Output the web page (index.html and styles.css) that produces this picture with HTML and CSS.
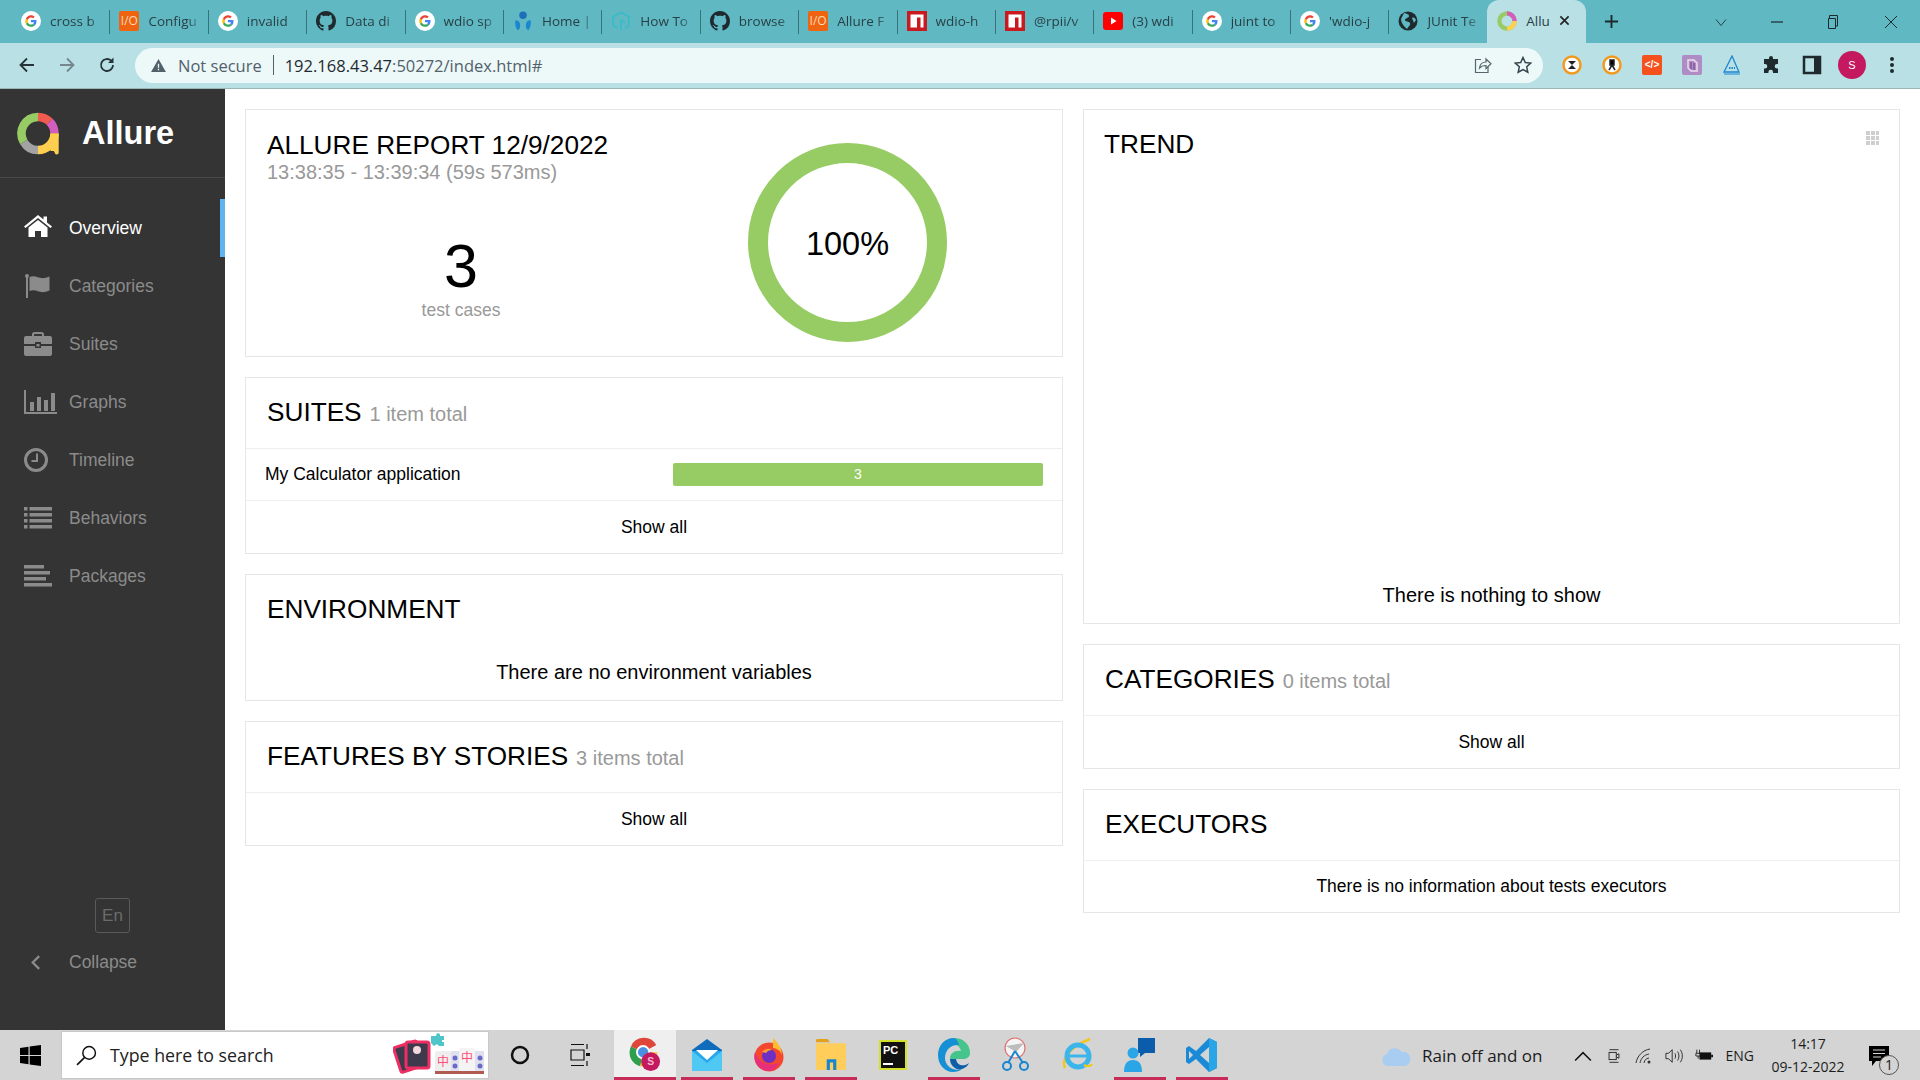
FILE: index.html
```html
<!DOCTYPE html>
<html lang="en">
<head>
  <meta charset="UTF-8" />
  <title>Allure Report</title>
  <link rel="stylesheet" href="styles.css">
</head>
<body>

  <!-- shared favicons -->
  <svg class="sprite" xmlns="http://www.w3.org/2000/svg">
    <symbol id="ic-google" viewBox="0 0 24 24">
      <circle cx="12" cy="12" r="12" fill="#fff"/>
      <path d="M18.6 12.2c0-.5 0-1-.1-1.4H12v2.7h3.7c-.2.9-.6 1.6-1.4 2.1l2.2 1.7c1.3-1.2 2.1-3 2.1-5.1z" fill="#4285f4"/>
      <path d="M12 19c1.9 0 3.4-.6 4.5-1.7l-2.2-1.7c-.6.4-1.4.7-2.3.7-1.8 0-3.3-1.2-3.8-2.8l-2.3 1.8C7 17.5 9.3 19 12 19z" fill="#34a853"/>
      <path d="M8.2 13.5c-.3-.9-.3-1.8 0-2.7L5.9 9c-1 1.9-1 4.2 0 6.3z" fill="#fbbc05"/>
      <path d="M12 7.8c1 0 1.9.3 2.6 1l1.900-2C15.300 5.700 13.800 5 12 5 9.300 5 7 6.500 5.900 9l2.300 1.800C8.700 9 10.200 7.800 12 7.800z" fill="#ea4335"/>
    </symbol>
    <symbol id="ic-github" viewBox="0 0 16 16">
      <path fill="#1f2a2e" d="M8 0C3.58 0 0 3.58 0 8c0 3.54 2.29 6.53 5.47 7.59.4.07.55-.17.55-.38 0-.19-.01-.82-.01-1.49-2.01.37-2.53-.49-2.69-.94-.09-.23-.48-.94-.82-1.13-.28-.15-.68-.52-.01-.53.63-.01 1.08.58 1.23.82.72 1.21 1.87.87 2.33.66.07-.52.28-.87.51-1.07-1.78-.2-3.64-.89-3.64-3.95 0-.87.31-1.59.82-2.15-.08-.2-.36-1.02.08-2.12 0 0 .67-.21 2.2.82.64-.18 1.32-.27 2-.27.68 0 1.36.09 2 .27 1.53-1.04 2.2-.82 2.2-.82.44 1.1.16 1.92.08 2.12.51.56.82 1.27.82 2.15 0 3.07-1.87 3.75-3.65 3.95.29.25.54.73.54 1.48 0 1.07-.01 1.93-.01 2.2 0 .21.15.46.55.38A8.013 8.013 0 0016 8c0-4.42-3.58-8-8-8z"/>
    </symbol>
    <symbol id="ic-npm" viewBox="0 0 20 20">
      <rect width="20" height="20" fill="#cb1a1f"/>
      <path d="M3.500 3.500h13v13h-3V6.500h-3.500v10h-6.500z" fill="#fff"/>
    </symbol>
    <symbol id="ic-wave" viewBox="0 0 20 24">
      <circle cx="10" cy="5" r="4.500" fill="#1c6fb8"/>
      <path d="M1 11c4 0 6 3 5.500 8-.3 2.500-2 4-3 4C1 20 0 15 1 11zM19 11c-4 0-6 3-5.500 8 .3 2.500 2 4 3 4 2.500-3 3.500-8 2.500-12z" fill="#1c86d0"/>
    </symbol>
    <symbol id="ic-howto" viewBox="0 0 22 24">
      <path d="M11 1.500 20.500 7v10L16 21M11 22.500V11l5 3M11 1.500 1.500 7v10l5 3" fill="none" stroke="#38bcc9" stroke-width="2"/>
    </symbol>
    <symbol id="ic-yt" viewBox="0 0 20 20">
      <rect y="1" width="20" height="18" rx="3" fill="#f00"/>
      <path d="M8 6.500 13.500 10 8 13.500z" fill="#fff"/>
    </symbol>
    <symbol id="ic-globe" viewBox="0 0 20 20">
      <circle cx="10" cy="10" r="9.500" fill="#1f2a2e"/>
      <path d="M6 2c3 1 5 1 5 3S7 7 7 9s4 1 5 3-2 4-3 6C5 15 3 11 3 8zM14 7c2-1 3 0 4 2l-2 3z" fill="#5fb8c2"/>
    </symbol>
  </svg>

  <header class="tabstrip">
    <div class="tab"><svg class="fav"><use href="#ic-google"/></svg><span class="tab-label">cross b</span></div>
    <div class="tab"><span class="fav io">I/O</span><span class="tab-label">Configu</span></div>
    <div class="tab"><svg class="fav"><use href="#ic-google"/></svg><span class="tab-label">invalid</span></div>
    <div class="tab"><svg class="fav"><use href="#ic-github"/></svg><span class="tab-label">Data di</span></div>
    <div class="tab"><svg class="fav"><use href="#ic-google"/></svg><span class="tab-label">wdio sp</span></div>
    <div class="tab"><svg class="fav"><use href="#ic-wave"/></svg><span class="tab-label">Home |</span></div>
    <div class="tab"><svg class="fav"><use href="#ic-howto"/></svg><span class="tab-label">How To</span></div>
    <div class="tab"><svg class="fav"><use href="#ic-github"/></svg><span class="tab-label">browse</span></div>
    <div class="tab"><span class="fav io">I/O</span><span class="tab-label">Allure F</span></div>
    <div class="tab"><svg class="fav"><use href="#ic-npm"/></svg><span class="tab-label">wdio-h</span></div>
    <div class="tab"><svg class="fav"><use href="#ic-npm"/></svg><span class="tab-label">@rpii/v</span></div>
    <div class="tab"><svg class="fav"><use href="#ic-yt"/></svg><span class="tab-label">(3) wdi</span></div>
    <div class="tab"><svg class="fav"><use href="#ic-google"/></svg><span class="tab-label">juint to</span></div>
    <div class="tab"><svg class="fav"><use href="#ic-google"/></svg><span class="tab-label">'wdio-j</span></div>
    <div class="tab tab-last"><svg class="fav"><use href="#ic-globe"/></svg><span class="tab-label">JUnit Te</span></div>
    <div class="tab tab-active">
      <svg class="fav" viewBox="0 0 42 42">
        <circle cx="21" cy="21" r="16" fill="none" stroke="#97cc64" stroke-width="9"/>
        <path d="M21 5a16 16 0 0 1 16 16" fill="none" stroke="#d35ebe" stroke-width="9"/>
        <path d="M37 21a16 16 0 0 1-16 16" fill="none" stroke="#ffd050" stroke-width="9"/>
      </svg>
      <span class="tab-label">Allu</span>
      <svg class="tab-close" viewBox="0 0 12 12"><path d="M1.500 1.500l9 9M10.500 1.500l-9 9" stroke="#222" stroke-width="1.800"/></svg>
    </div>
    <svg class="new-tab" viewBox="0 0 16 16"><path d="M8 1v14M1 8h14" stroke="#1c2a2e" stroke-width="2"/></svg>
    <div class="win-btns">
      <span class="win-btn"><svg width="12" height="12" viewBox="0 0 12 12"><path d="M1 3.500l5 6 5-6" fill="none" stroke="#2b3f44" stroke-width="1"/></svg></span>
      <span class="win-btn"><svg width="12" height="12" viewBox="0 0 12 12"><path d="M0 6h12" stroke="#1c2a2e" stroke-width="1.200"/></svg></span>
      <span class="win-btn"><svg width="14" height="14" viewBox="0 0 14 14"><path d="M3.500 3V.5h8V11H9M2.500 3.500h7v10h-7z" fill="none" stroke="#1c2a2e" stroke-width="1"/></svg></span>
      <span class="win-btn win-close"><svg width="14" height="14" viewBox="0 0 14 14"><path d="M1 1l12 12M13 1L1 13" stroke="#1c2a2e" stroke-width="1"/></svg></span>
    </div>
  </header>

  <div class="toolbar">
    <div class="nav-btns">
      <svg class="nav-btn" viewBox="0 0 18 18"><path d="M16 9H3M9 2.500 2.500 9 9 15.500" fill="none" stroke="#26343a" stroke-width="1.800"/></svg>
      <svg class="nav-btn" viewBox="0 0 18 18"><path d="M2 9h13M9 2.500 15.500 9 9 15.500" fill="none" stroke="#73878c" stroke-width="1.800"/></svg>
      <svg class="nav-btn" viewBox="0 0 18 18"><path d="M15 9a6 6 0 1 1-1.800-4.300" fill="none" stroke="#26343a" stroke-width="1.800"/><path d="M15.500 1.500v5.500H10z" fill="#26343a"/></svg>
    </div>
    <div class="urlbar">
      <svg class="warn" viewBox="0 0 16 14"><path d="M8 0l8 14H0z" fill="#51616a"/><path d="M7.300 5h1.400v4.500H7.300zM7.300 10.500h1.400V12H7.300z" fill="#edf8f9"/></svg>
      <span class="not-secure">Not secure</span>
      <span class="url-sep"></span>
      <span class="url">192.168.43.47<span class="url-dim">:50272/index.html#</span></span>
      <svg class="url-icon url-share" viewBox="0 0 18 18"><path d="M7 3.500H1.500v13H14V11" fill="none" stroke="#56666c" stroke-width="1.200"/><path d="M5.500 12c.5-4 3-6 6.500-6V3l5 4.800-5 4.700v-3c-3 0-5 .8-6.500 2.500z" fill="none" stroke="#56666c" stroke-width="1.200"/></svg>
      <svg class="url-icon" viewBox="0 0 18 18"><path d="M9 1.500l2.300 5 5.400.6-4 3.700 1.100 5.400L9 13.500l-4.800 2.700 1.100-5.400-4-3.700 5.400-.6z" fill="none" stroke="#34464c" stroke-width="1.500"/></svg>
    </div>
    <div class="ext-btns">
      <svg class="ext" viewBox="0 0 20 20"><circle cx="10" cy="10" r="8.500" fill="#fff" stroke="#f29a1e" stroke-width="2.500"/><path d="M6 6h8l-8 8h8z" fill="#222"/></svg>
      <svg class="ext" viewBox="0 0 20 20"><circle cx="10" cy="10" r="8.500" fill="#fff" stroke="#f29a1e" stroke-width="2.500"/><path d="M8 5h4v5H8zM10 10l-3 5M10 10l3 5" stroke="#222" stroke-width="1.500"/></svg>
      <span class="ext ext-code">&lt;/&gt;</span>
      <svg class="ext" viewBox="0 0 20 20"><rect width="20" height="20" rx="2" fill="#b08cc4"/><path d="M6 5h6l3 3v8H9l-3-3z" fill="none" stroke="#e9dcf0" stroke-width="1.500"/><path d="M9 7v7M12 8v7" stroke="#7e5a98" stroke-width="1.500"/></svg>
      <svg class="ext" viewBox="0 0 20 20"><path d="M10 1 2 17h15z" fill="none" stroke="#1c86d0" stroke-width="1.300"/><path d="M2 19h16" stroke="#1c86d0" stroke-width="1"/><path d="M7 13h6" stroke="#1c86d0" stroke-width="2" stroke-dasharray="1.500 1"/></svg>
      <svg class="ext" viewBox="0 0 20 20"><path d="M7 3a2 2 0 0 1 4 0v1h5v5h-1a2.300 2.300 0 0 0 0 4.600h1V18h-5v-1a2.300 2.300 0 0 0-4.600 0v1H2v-4.500h1a2.300 2.300 0 0 0 0-4.600H2V4h5z" fill="#1f2a2e"/></svg>
      <svg class="ext" viewBox="0 0 20 20"><path d="M2 2h16v16H2z" fill="none" stroke="#1f2a2e" stroke-width="2.500"/><path d="M12 2h6v16h-6z" fill="#1f2a2e"/></svg>
      <span class="avatar">S</span>
      <svg class="ext" viewBox="0 0 20 20"><circle cx="10" cy="4" r="2" fill="#1f2a2e"/><circle cx="10" cy="10" r="2" fill="#1f2a2e"/><circle cx="10" cy="16" r="2" fill="#1f2a2e"/></svg>
    </div>
  </div>

  <div class="app">
    <aside class="sidebar">
      <div class="brand">
        <svg class="brand-logo" viewBox="0 0 42 42">
          <path d="M21 4.500a16.500 16.500 0 0 1 11.700 4.800" fill="none" stroke="#f25c50" stroke-width="8.500"/>
          <path d="M32.700 9.300A16.500 16.500 0 0 1 37.500 21" fill="none" stroke="#d35ebe" stroke-width="8.500"/>
          <path d="M37.500 21A16.500 16.500 0 0 1 21 37.500" fill="none" stroke="#ffd050" stroke-width="8.500"/>
          <path d="M33.500 21h8.200v19a2 2 0 0 1-4 0l-1-1.500H33.500z" fill="#ffd050"/>
          <path d="M21 37.500A16.500 16.500 0 0 1 6.700 29.250" fill="none" stroke="#a3a3a3" stroke-width="8.500"/>
          <path d="M6.700 29.250A16.500 16.500 0 0 1 21 4.500" fill="none" stroke="#97cc64" stroke-width="8.500"/>
        </svg>
        <span class="brand-name">Allure</span>
      </div>
      <nav class="side-nav">
        <a class="side-item side-item-active">
          <svg class="side-icon side-icon-home" viewBox="0 0 28 22"><path d="M14 0 0 11.500l1.500 1.500L14 3l12.500 10 1.500-1.500L23 7.500V1.500h-3.500v3z" fill="#fff"/><path d="M14 5 4.500 12.500V22H11v-6h6v6h6.500v-9.500z" fill="#fff"/></svg>
          <span>Overview</span>
        </a>
        <a class="side-item">
          <svg class="side-icon" viewBox="0 0 28 24"><path d="M3 2v22" stroke="#8b8b8b" stroke-width="2"/><circle cx="3" cy="2" r="2" fill="#8b8b8b"/><path d="M5.500 3c6-2.500 9 2 15 1 1.500-.2 3-.7 5-1.500v14c-2 .8-3.500 1.300-5 1.500-6 1-9-3.500-15-1z" fill="#8b8b8b"/></svg>
          <span>Categories</span>
        </a>
        <a class="side-item">
          <svg class="side-icon" viewBox="0 0 28 24"><path d="M9 5V2.500A1.500 1.500 0 0 1 10.500 1h7A1.500 1.500 0 0 1 19 2.500V5" fill="none" stroke="#8b8b8b" stroke-width="2"/><path d="M2 4h24a2 2 0 0 1 2 2v6H17v-2h-6v2H0V6a2 2 0 0 1 2-2zM0 14h11v2h6v-2h11v8a2 2 0 0 1-2 2H2a2 2 0 0 1-2-2z" fill="#8b8b8b"/><path d="M12.500 12h3v2.500h-3z" fill="#8b8b8b"/></svg>
          <span>Suites</span>
        </a>
        <a class="side-item">
          <svg class="side-icon side-icon-wide" viewBox="0 0 33 24"><path d="M1 0v23h32" fill="none" stroke="#8b8b8b" stroke-width="2"/><path d="M6 12h4v9H6zM13 7h4v14h-4zM20 10h4v11h-4zM27 3h4v18h-4z" fill="#8b8b8b"/></svg>
          <span>Graphs</span>
        </a>
        <a class="side-item">
          <svg class="side-icon" viewBox="0 0 28 24"><circle cx="12" cy="12" r="10.500" fill="none" stroke="#8b8b8b" stroke-width="3"/><path d="M13 5.500V13H7.500" fill="none" stroke="#8b8b8b" stroke-width="2"/></svg>
          <span>Timeline</span>
        </a>
        <a class="side-item">
          <svg class="side-icon" viewBox="0 0 28 22"><path d="M0 0h3.500v3.500H0zM5.500 0H28v3.500H5.500zM0 6h3.500v3.500H0zM5.500 6H28v3.500H5.500zM0 12h3.500v3.500H0zM5.500 12H28v3.500H5.500zM0 18h3.500v3.500H0zM5.500 18H28v3.500H5.500z" fill="#8b8b8b"/></svg>
          <span>Behaviors</span>
        </a>
        <a class="side-item">
          <svg class="side-icon" viewBox="0 0 28 22"><path d="M0 0h20v3.500H0zM0 6h26v3.500H0zM0 12h22v3.500H0zM0 18h28v3.500H0z" fill="#8b8b8b"/></svg>
          <span>Packages</span>
        </a>
      </nav>
      <div class="side-foot">
        <span class="lang-btn">En</span>
        <a class="collapse">
          <svg class="collapse-icon" viewBox="0 0 12 18"><path d="M10 2 3 9l7 7" fill="none" stroke="#8b8b8b" stroke-width="2.500"/></svg>
          <span>Collapse</span>
        </a>
      </div>
    </aside>

    <main class="content">
      <div class="col">
        <section class="card summary">
          <div class="summary-left">
            <h2 class="title">ALLURE REPORT 12/9/2022</h2>
            <div class="summary-time">13:38:35 - 13:39:34 (59s 573ms)</div>
            <div class="summary-stat">
              <div class="stat-num">3</div>
              <div class="stat-label">test cases</div>
            </div>
          </div>
          <div class="summary-right">
            <div class="donut">100%</div>
          </div>
        </section>

        <section class="card">
          <div class="card-head">
            <h2 class="title">SUITES</h2> <span class="count">1 item total</span>
          </div>
          <div class="suite-row">
            <span class="suite-name">My Calculator application</span>
            <div class="suite-bar">3</div>
          </div>
          <div class="show-all">Show all</div>
        </section>

        <section class="card">
          <div class="card-title-only"><h2 class="title">ENVIRONMENT</h2></div>
          <div class="empty-msg env-msg">There are no environment variables</div>
        </section>

        <section class="card">
          <div class="card-head">
            <h2 class="title">FEATURES BY STORIES</h2> <span class="count">3 items total</span>
          </div>
          <div class="show-all">Show all</div>
        </section>
      </div>

      <div class="col">
        <section class="card trend">
          <h2 class="title">TREND</h2>
          <svg class="grip" viewBox="0 0 14 14"><path d="M0 0h4v4H0zM5 0h4v4H5zM10 0h3v4h-3zM0 5h4v4H0zM5 5h4v4H5zM10 5h3v4h-3zM0 10h4v4H0zM5 10h4v4H5zM10 10h3v4h-3z" fill="#cfcfcf"/></svg>
          <div class="trend-empty">There is nothing to show</div>
        </section>

        <section class="card">
          <div class="card-head">
            <h2 class="title">CATEGORIES</h2> <span class="count">0 items total</span>
          </div>
          <div class="show-all">Show all</div>
        </section>

        <section class="card">
          <div class="card-head">
            <h2 class="title">EXECUTORS</h2>
          </div>
          <div class="show-all show-all-short">There is no information about tests executors</div>
        </section>
      </div>
    </main>
  </div>

  <footer class="taskbar">
    <div class="start">
      <svg width="21" height="21" viewBox="0 0 21 21"><path d="M0 3l8.500-1.200V10H0zM9.700 1.600 21 0v10H9.700zM0 11h8.500v8.200L0 18zM9.700 11H21v10L9.700 19.400z" fill="#000"/></svg>
    </div>
    <div class="search">
      <svg class="search-icon" viewBox="0 0 20 20"><circle cx="12.500" cy="7.500" r="6" fill="none" stroke="#111" stroke-width="1.400"/><path d="M8 12 1 19" stroke="#111" stroke-width="1.600"/></svg>
      <span class="search-text">Type here to search</span>
      <svg class="search-promo" viewBox="0 0 92 44">
        <g transform="rotate(-18 18 26)"><rect x="4" y="12" width="24" height="26" rx="2" fill="#3c3a4c" stroke="#ee2f63" stroke-width="3"/></g>
        <rect x="13" y="11" width="23" height="26" rx="2" fill="#3c3a4c" stroke="#ee2f63" stroke-width="3"/>
        <circle cx="24" cy="19" r="4" fill="#f3d6de"/>
        <path d="M38 5h5l1-3 3 1v2h4v4h-2v2h2v4h-5l-2-2-3 2-3-3z" fill="#4fc5c9"/>
        <rect x="42" y="20" width="16" height="22" rx="1.500" fill="#eee"/>
        <rect x="58" y="20" width="8" height="22" fill="#e0e0ee"/>
        <rect x="66" y="17" width="16" height="25" rx="1.500" fill="#f4f4f4"/>
        <rect x="82" y="20" width="9" height="22" fill="#e0e0ee"/>
        <path d="M42 40h49v3H42z" fill="#b05a50"/>
        <text x="50" y="35" class="promo-glyph" text-anchor="middle">中</text>
        <text x="74" y="31" class="promo-glyph" text-anchor="middle">中</text>
        <circle cx="62" cy="27" r="2.500" fill="#6a6ac8"/><circle cx="62" cy="35" r="2.500" fill="#6a6ac8"/>
        <circle cx="87" cy="27" r="2.500" fill="#6a6ac8"/><circle cx="87" cy="35" r="2.500" fill="#6a6ac8"/>
      </svg>
    </div>
    <div class="task-btn"><svg width="20" height="20" viewBox="0 0 20 20"><circle cx="10" cy="10" r="8" fill="none" stroke="#111" stroke-width="2.500"/></svg></div>
    <div class="task-btn task-view"><svg width="22" height="22" viewBox="0 0 22 22"><path d="M1 .5h13M1 21.500h13M1 6h13v10H1z" fill="none" stroke="#111" stroke-width="1.200"/><path d="M17 0v5M17 17v5" stroke="#111" stroke-width="1.200"/><path d="M16 9h4v3h-4z" fill="#111"/></svg></div>

    <div class="app-btn app-btn-active app-on">
      <svg class="app-icon" viewBox="0 0 34 36">
        <path d="M15 15 2 9A15 15 0 0 1 29 7.500z" fill="#dd4638"/>
        <path d="M15 15 2 9a15 15 0 0 0 10 21z" fill="#2f9e4d"/>
        <path d="M15 15h15a15 15 0 0 1-18 15z" fill="#fbc02d"/>
        <circle cx="15" cy="15" r="6.500" fill="#4a90e2" stroke="#fff" stroke-width="2"/>
        <circle cx="23" cy="25" r="10" fill="#c4185f"/>
        <text x="23" y="29" class="chrome-s" text-anchor="middle">S</text>
      </svg>
    </div>
    <div class="app-btn app-on">
      <svg class="app-icon" viewBox="0 0 32 32"><path d="M1 11 16 0l15 11v21H1z" fill="#0f6cbd"/><path d="M1 12h30v20H1z" fill="#28a8ea"/><path d="M5 11h22L16 21z" fill="#fff"/><path d="M1 12l15 12 15-12v20H1z" fill="#50c8f4"/></svg>
    </div>
    <div class="app-btn app-on">
      <svg class="app-icon" viewBox="0 0 32 34"><circle cx="16" cy="19" r="14.500" fill="#f4472f"/><path d="M16 33a14.500 14.500 0 0 1-14-19c3 10 12 15 24 11-2 5-6 8-10 8z" fill="#e8307a"/><path d="M20 0c4 4 9 9 9 18 0-4-5-8-9-8z" fill="#ffbd2e"/><circle cx="16" cy="18" r="7" fill="#6d2fc4"/><path d="M9 14c3-4 8-4 10-2-2 0-5 1-6 3z" fill="#ff9a2e"/></svg>
    </div>
    <div class="app-btn app-on app-on-more">
      <svg class="app-icon" viewBox="0 0 30 32"><path d="M1 2a1 1 0 0 1 1-1h10l2 3H1z" fill="#e3a21a"/><path d="M1 5h28v25H1z" fill="#ffce5a"/><path d="M11 30V20h9v10h-3v-7h-3v7z" fill="#1a86d0"/></svg>
    </div>
    <div class="app-btn">
      <svg class="app-icon app-icon-pc" viewBox="0 0 28 32"><rect x="1" y="2" width="26" height="28" fill="#111" stroke="#d4e12a" stroke-width="2"/><text x="4" y="15" class="pc-glyph">PC</text><path d="M4 24h10v2H4z" fill="#fff"/></svg>
    </div>
    <div class="app-btn app-on">
      <svg class="app-icon" viewBox="0 0 32 36"><path d="M16 1c9 0 16 6 16 15 0 4-3 6-7 6H12c0-6 5-9 11-8-1-4-4-7-9-7-3 0-6 1-8 3 2-5 6-9 10-9z" fill="#45c48b"/><path d="M16 1C7 1 0 8 0 18s7 17 15 17c3 0 7-1 9-3-9 3-17-3-17-11 0-8 6-14 14-13-1-4-3-7-5-7z" fill="#1590d4"/><path d="M12 22c0 7 7 12 12 10 3-1 6-3 7-6-5 4-12 3-13-4z" fill="#0c5ea8"/></svg>
    </div>
    <div class="app-btn">
      <svg class="app-icon" viewBox="0 0 30 36"><circle cx="14" cy="11" r="10" fill="#f4f4f4" stroke="#e07070" stroke-width="1.200"/><path d="M5 9l18-3-8 9z" fill="#bcbcbc"/><path d="M14 14 7 26M14 14l8 12" stroke="#1a86d0" stroke-width="2"/><circle cx="6" cy="29" r="4" fill="none" stroke="#1a86d0" stroke-width="2"/><circle cx="23" cy="29" r="4" fill="none" stroke="#1a86d0" stroke-width="2"/></svg>
    </div>
    <div class="app-btn">
      <svg class="app-icon" viewBox="0 0 32 34"><path d="M3 30C0 24 4 10 28 1" fill="none" stroke="#f5c518" stroke-width="2.500"/><circle cx="16" cy="18" r="11" fill="none" stroke="#3cb6ea" stroke-width="5"/><path d="M6 18h21" stroke="#3cb6ea" stroke-width="3"/><path d="M22 27c4 2 7 1 8-1" fill="none" stroke="#f5c518" stroke-width="2"/></svg>
    </div>
    <div class="app-btn app-on">
      <svg class="app-icon" viewBox="0 0 32 36"><path d="M14 1h17v15H21l-5 4v-4h-2z" fill="#0b5cab"/><circle cx="9" cy="16" r="5.500" fill="#2aa6e6"/><path d="M0 35c0-8 3-12 9-12s9 4 9 12z" fill="#2aa6e6"/></svg>
    </div>
    <div class="app-btn app-on">
      <svg class="app-icon" viewBox="0 0 32 34"><path d="M23 0l8 4v26l-8 4-13-13-7 5-3-2V10l3-2 7 5z" fill="#1a8ad6"/><path d="M23 9v16l-9-8zM3 13l4 4-4 4z" fill="#d4d4d4"/><path d="M23 0l8 4v26l-8 4z" fill="#2aa6e6"/></svg>
    </div>

    <div class="tray">
      <svg class="tray-cloud" viewBox="0 0 30 22"><path d="M7 21a6 6 0 0 1-1-11.800A8 8 0 0 1 20.500 7 6.500 6.500 0 0 1 24 21z" fill="#a8cdf0"/></svg>
      <span class="tray-weather">Rain off and on</span>
      <svg class="tray-ic tray-chev" viewBox="0 0 16 10"><path d="M1 9l7-7 7 7" fill="none" stroke="#111" stroke-width="1.300"/></svg>
      <svg class="tray-ic" viewBox="0 0 18 20"><path d="M4 3h10M4 17h10" stroke="#222" stroke-width="1"/><rect x="3.500" y="6" width="8" height="8" fill="none" stroke="#222" stroke-width="1"/><path d="M11.500 9l3-1.500v5l-3-1.500" fill="none" stroke="#222" stroke-width="1"/></svg>
      <svg class="tray-ic" viewBox="0 0 18 18"><path d="M1 16C2 9 8 3 15 2M5 16c1-5 4-8 9-9M9 16c.5-3 2-4.500 5-5" fill="none" stroke="#333" stroke-width="1"/><circle cx="14" cy="15" r="1.500" fill="#333"/></svg>
      <svg class="tray-ic" viewBox="0 0 20 18"><path d="M1 6h3l4-4v14l-4-4H1z" fill="none" stroke="#222" stroke-width="1"/><path d="M11 6c1 2 1 4 0 6M14 4c2 3 2 7 0 10M17 2c3 4 3 10 0 14" fill="none" stroke="#222" stroke-width="1"/></svg>
      <svg class="tray-ic" viewBox="0 0 20 14"><path d="M2 0v4M5 0v4M1 4h5v3H1zM3.500 7v3" stroke="#222" fill="none"/><rect x="5" y="3" width="13" height="8" fill="#111"/><path d="M18 5.500h2v3h-2z" fill="#111"/></svg>
      <span class="tray-lang">ENG</span>
      <div class="tray-clock"><div>14:17</div><div>09-12-2022</div></div>
      <div class="tray-notify">
        <svg width="22" height="22" viewBox="0 0 22 22"><path d="M1 1h20v15H8l-4 5v-5H1z" fill="#000"/><path d="M5 5h12M5 8.500h12M5 12h8" stroke="#d4d4d4" stroke-width="1.200"/></svg>
        <span class="notify-badge">1</span>
      </div>
    </div>
  </footer>

</body>
</html>
```

FILE: styles.css
```css
* {
  box-sizing: border-box;
}
html, body {
  margin: 0;
  padding: 0;
}
body {
  width: 1920px;
  height: 1080px;
  overflow: hidden;
  display: flex;
  flex-direction: column;
  font-family: "Liberation Sans", Arial, sans-serif;
  background: #fff;
  color: #000;
}
.sprite {
  position: absolute;
  width: 0;
  height: 0;
}

/* browser tabs */
.tabstrip {
  height: 43px;
  flex: none;
  display: flex;
  align-items: stretch;
  padding-left: 12px;
  background: #5fb8c2;
  font-family: "Open Sans", "Noto Sans", sans-serif;
  font-size: 13.5px;
  color: #2a3f45;
}
.tab {
  width: 98.4px;
  flex: none;
  display: flex;
  align-items: center;
  position: relative;
  padding: 0 0 2px 9px;
}
.tab::after {
  content: "";
  position: absolute;
  right: 0;
  top: 10px;
  height: 24px;
  width: 1px;
  background: #39707a;
}
.tab-last::after {
  display: none;
}
.fav {
  width: 20px;
  height: 20px;
  flex: none;
  margin-right: 9px;
}
.io {
  background: #ee6411;
  color: #ffd9b8;
  font-size: 12px;
  line-height: 20px;
  text-align: center;
  border-radius: 2px;
}
.tab-label {
  width: 56px;
  overflow: hidden;
  white-space: nowrap;
  -webkit-mask-image: linear-gradient(90deg, #000 70%, transparent);
  mask-image: linear-gradient(90deg, #000 70%, transparent);
}
.tab-active {
  width: 99px;
  margin-left: -0.6px;
  background: #b8e0e5;
  border-radius: 12px 12px 0 0;
  padding-left: 10px;
}
.tab-active::after {
  display: none;
}
.tab-active .tab-label {
  width: 27px;
  flex: none;
  margin-right: 6px;
  -webkit-mask-image: none;
  mask-image: none;
}
.tab-close {
  width: 11px;
  height: 11px;
}
.new-tab {
  width: 15px;
  height: 15px;
  align-self: center;
  margin-left: 18px;
}
.win-btns {
  margin-left: auto;
  display: flex;
  align-items: center;
  padding-left: 1px;
}
.win-btn {
  width: 56px;
  display: flex;
  justify-content: center;
}
.win-close {
  width: 59px;
}

/* browser toolbar */
.toolbar {
  height: 46px;
  flex: none;
  display: flex;
  align-items: center;
  padding: 0 8px 1px 7px;
  background: #b8e0e5;
  border-bottom: 1px solid #9ab4b8;
}
.nav-btns {
  display: flex;
  width: 128px;
  flex: none;
}
.nav-btn {
  width: 18px;
  height: 18px;
  margin: 0 11px;
}
.urlbar {
  width: 1408px;
  height: 35px;
  flex: none;
  display: flex;
  align-items: center;
  padding-left: 16px;
  border-radius: 18px;
  background: #edf8f9;
  font-family: "Open Sans", "Noto Sans", sans-serif;
  font-size: 16.5px;
}
.warn {
  width: 15px;
  height: 13px;
  margin-right: 12px;
}
.not-secure {
  color: #51616a;
}
.url-sep {
  width: 1px;
  height: 20px;
  margin: 0 11px;
  background: #51616a;
}
.url {
  color: #1f2a2e;
}
.url-dim {
  color: #51616a;
}
.url-icon {
  width: 18px;
  height: 18px;
  margin-right: 11px;
}
.url-share {
  margin-left: auto;
  margin-right: 22px;
}
.ext-btns {
  margin-left: 9px;
  display: flex;
  align-items: center;
}
.ext {
  width: 20px;
  height: 20px;
  margin: 0 10px;
  flex: none;
}
.ext-code {
  background: #f4511e;
  color: #fff;
  font-size: 10px;
  font-weight: bold;
  line-height: 20px;
  text-align: center;
  border-radius: 2px;
}
.avatar {
  width: 28px;
  height: 28px;
  margin: 0 6px;
  flex: none;
  border-radius: 50%;
  background: #c4185f;
  color: #fff;
  font-size: 11px;
  line-height: 28px;
  text-align: center;
}

/* allure app */
.app {
  flex: 1;
  min-height: 0;
  display: flex;
}
.sidebar {
  width: 225px;
  flex: none;
  display: flex;
  flex-direction: column;
  background: #343434;
  color: #8b8b8b;
  font-size: 17.5px;
}
.brand {
  height: 89px;
  display: flex;
  align-items: center;
  padding-left: 17px;
  border-bottom: 1px solid #4a4a4a;
}
.brand-logo {
  width: 42px;
  height: 43px;
  margin-right: 23px;
  overflow: visible;
}
.brand-name {
  color: #fff;
  font-size: 32.5px;
  font-weight: bold;
}
.side-nav {
  padding-top: 21px;
}
.side-item {
  height: 58px;
  display: flex;
  align-items: center;
  padding-left: 24px;
  position: relative;
}
.side-item-active {
  color: #fff;
}
.side-item-active::after {
  content: "";
  position: absolute;
  right: 0;
  top: 0;
  bottom: 0;
  width: 5px;
  background: #5eb3f0;
}
.side-icon {
  width: 28px;
  height: 24px;
  flex: none;
  margin-right: 17px;
}
.side-icon-home {
  margin-top: -4px;
}
.side-icon-wide {
  width: 33px;
  margin-right: 12px;
}
.side-foot {
  margin-top: auto;
  display: flex;
  flex-direction: column;
  padding-bottom: 51px;
}
.lang-btn {
  width: 35px;
  height: 35px;
  margin: 0 0 12px 95px;
  border: 1px solid #5a5a5a;
  border-radius: 3px;
  color: #6b6b6b;
  font-size: 17px;
  line-height: 33px;
  text-align: center;
}
.collapse {
  height: 34px;
  display: flex;
  align-items: center;
  padding-left: 30px;
}
.collapse-icon {
  width: 11px;
  height: 17px;
  margin-right: 28px;
}

.content {
  flex: 1;
  min-width: 0;
  display: grid;
  grid-template-columns: 818px 817px;
  gap: 20px;
  align-content: start;
  padding: 20px 20px 0;
  font-size: 17.5px;
}
.col {
  display: flex;
  flex-direction: column;
  gap: 20px;
}
.card {
  border: 1px solid #e6e6e6;
  position: relative;
}
.title {
  display: inline;
  margin: 0;
  font-size: 26.2px;
  font-weight: normal;
}
.count {
  color: #999;
  font-size: 20px;
  margin-left: 3px;
}
.card-head {
  height: 71px;
  padding: 19px 20px 0 21px;
  border-bottom: 1px solid #eee;
  white-space: nowrap;
}
.card-title-only {
  padding: 19px 20px 0 21px;
  height: 55px;
}

.summary {
  height: 248px;
  display: flex;
}
.summary-left {
  width: 430px;
  padding: 20px 20px 0 21px;
}
.summary-time {
  color: #999;
  font-size: 20px;
  line-height: 22px;
}
.summary-stat {
  margin-top: 49px;
  margin-left: -1px;
  text-align: center;
}
.stat-num {
  font-size: 61px;
  line-height: 68px;
}
.stat-label {
  color: #999;
  font-size: 17.5px;
  line-height: 20px;
}
.summary-right {
  flex: 1;
  display: flex;
  padding: 33px 0 0 72px;
}
.donut {
  width: 199px;
  height: 199px;
  border: 20px solid #97cc64;
  border-radius: 50%;
  display: flex;
  align-items: center;
  justify-content: center;
  font-size: 32.5px;
  padding-top: 3px;
}

.suite-row {
  height: 52px;
  display: flex;
  align-items: center;
  justify-content: space-between;
  padding: 0 19px;
  border-bottom: 1px solid #eee;
}
.suite-bar {
  width: 370px;
  height: 23px;
  background: #97cc64;
  border-radius: 2px;
  color: #fff;
  font-size: 14px;
  line-height: 23px;
  text-align: center;
}
.show-all {
  height: 52px;
  display: flex;
  align-items: center;
  justify-content: center;
}
.show-all-short {
  height: 51px;
}
.empty-msg {
  text-align: center;
}
.env-msg {
  font-size: 20px;
  height: 70px;
  padding-top: 31px;
}

.trend {
  height: 515px;
  padding: 19px 20px;
}
.grip {
  position: absolute;
  top: 21px;
  right: 19px;
  width: 14px;
  height: 14px;
}
.trend-empty {
  position: absolute;
  left: 0;
  right: 0;
  top: 474px;
  text-align: center;
  font-size: 20px;
}

/* windows taskbar */
.taskbar {
  height: 50px;
  flex: none;
  display: flex;
  align-items: stretch;
  background: #d4d4d4;
}
.start {
  width: 61px;
  flex: none;
  display: flex;
  align-items: center;
  justify-content: center;
}
.search {
  width: 428px;
  flex: none;
  display: flex;
  align-items: center;
  padding-left: 14px;
  margin: 1px 0;
  background: #fff;
  border: 1px solid #c8c8c8;
  font-family: "Open Sans", "Noto Sans", sans-serif;
  font-size: 17.8px;
  color: #222;
  position: relative;
}
.search-icon {
  width: 21px;
  height: 21px;
  margin-right: 13px;
}
.search-promo {
  position: absolute;
  right: 3px;
  top: -4px;
  width: 92px;
  height: 50px;
}
.promo-glyph {
  font-family: "Noto Sans CJK SC", sans-serif;
  font-size: 12px;
  fill: #ff4f78;
}
.task-btn {
  width: 61px;
  flex: none;
  display: flex;
  align-items: center;
  justify-content: center;
}
.task-view {
  margin-right: 3px;
}
.app-btn {
  width: 61.9px;
  flex: none;
  display: flex;
  align-items: center;
  justify-content: center;
  position: relative;
}
.app-btn-active {
  background: #efefef;
}
.app-icon {
  width: 32px;
  height: 36px;
}
.app-icon-pc {
  width: 28px;
  height: 32px;
}
.chrome-s {
  font-size: 11px;
  font-weight: bold;
  fill: #f3b6cf;
}
.pc-glyph {
  font-size: 11px;
  font-weight: bold;
  fill: #fff;
}
.app-on::after {
  content: "";
  position: absolute;
  left: 5px;
  right: 5px;
  bottom: 0;
  height: 3px;
  background: #c72c58;
}
.app-btn-active::after {
  left: 0;
  right: 0;
}
.app-on-more::before {
  content: "";
  position: absolute;
  left: 46px;
  width: 9px;
  bottom: 0;
  height: 3px;
  background: #e08098;
}
.tray {
  margin-left: auto;
  display: flex;
  align-items: center;
  font-family: "Open Sans", "Noto Sans", sans-serif;
  color: #1c1c1c;
  padding-top: 1px;
}
.tray-cloud {
  width: 30px;
  height: 22px;
  margin-right: 11px;
}
.tray-weather {
  font-size: 17px;
  margin-right: 31px;
}
.tray-ic {
  width: 18px;
  height: 18px;
  margin-right: 12px;
}
.tray-chev {
  margin-right: 13px;
}
.tray-lang {
  font-size: 14px;
  margin-left: 1px;
  margin-right: 12px;
}
.tray-clock {
  font-size: 14px;
  line-height: 23px;
  text-align: center;
  width: 84px;
  margin-top: -2px;
}
.tray-notify {
  width: 70px;
  height: 50px;
  display: flex;
  align-items: center;
  justify-content: center;
  padding-right: 12px;
  position: relative;
}
.notify-badge {
  position: absolute;
  left: 29px;
  top: 24px;
  width: 20px;
  height: 20px;
  border: 1px solid #555;
  border-radius: 50%;
  background: #d4d4d4;
  font-size: 14px;
  line-height: 18px;
  text-align: center;
}
```
